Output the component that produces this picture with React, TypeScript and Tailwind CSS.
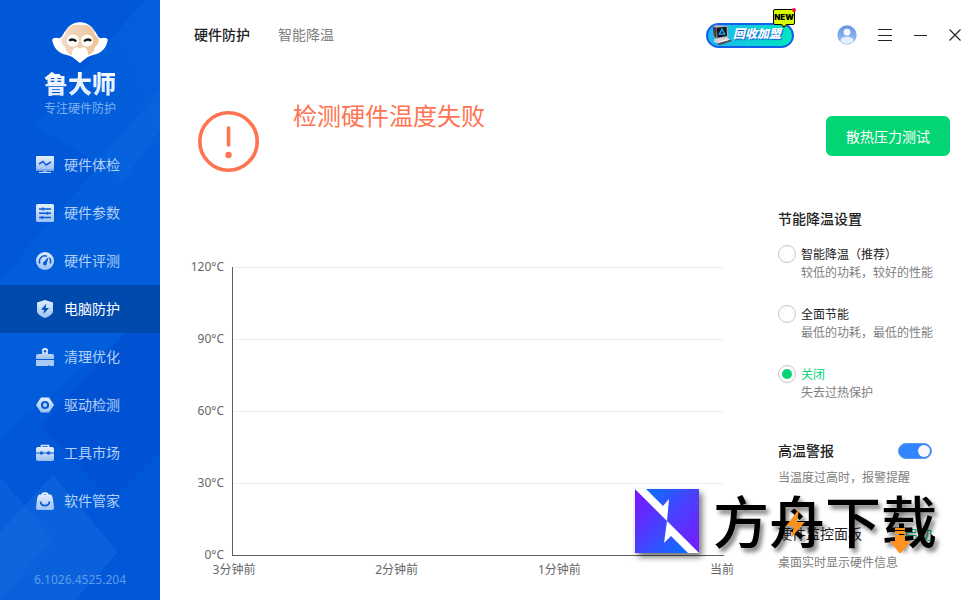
import React, { useState } from 'react';

const BrandLogo: React.FC = () => (
  <svg viewBox="20 14 166 122" className="h-[41px] w-[56px]" aria-hidden="true">
    <defs>
      <linearGradient id="face" x1="0" y1="0" x2="1" y2="0">
        <stop offset="0" stopColor="#f0dccb" />
        <stop offset="1" stopColor="#f0c396" />
      </linearGradient>
    </defs>
    <path
      d="M20 66 Q24 58 42 62 C50 60 54 46 62 37 C80 7 126 7 144 37 C152 46 156 60 164 62 Q182 58 186 66 C182 92 165 108 142 112 C120 117 112 130 103 136 C94 130 86 117 64 112 C40 108 24 92 20 66Z"
      fill="#fff"
    />
    <path
      d="M103 24 C80 17 62 32 61 47 C60 56 48 57 47 69 C46 82 58 84 60 93 C62 106 72 112 84 113 L122 113 C134 112 144 106 146 93 C148 84 160 82 159 69 C158 57 146 56 145 47 C144 32 126 17 103 24Z"
      fill="url(#face)"
    />
    <circle cx="82" cy="69" r="18" fill="#fff" />
    <circle cx="124" cy="69" r="18" fill="#fff" />
    <path d="M81 118 C74 100 88 86 96 90 Q103 96 110 90 C118 86 132 100 125 118 L103 134Z" fill="#fff" />
    <path d="M71 70 Q78 62 92 71M115 71 Q128 62 136 70" stroke="#141414" strokeWidth="7" fill="none" />
  </svg>
);

const NAV_BLUE = '#0a5cd8';

const navItems = [
  {
    title: '硬件体检',
    icon: (
      <>
        <path d="M1 0h16a1 1 0 0 1 1 1v13H0V1a1 1 0 0 1 1-1Z" fill="url(#nav)" />
        <path d="M0 13h18v1a1 1 0 0 1-1 1H1a1 1 0 0 1-1-1Z" fill="#78a9ee" />
        <path d="M7 15h4v1H7z" fill="#78a9ee" />
        <path d="M3 16h12v1H3z" fill="#c4d9f8" />
        <path d="M3 8l4-2.5L10 9l5-3" stroke={NAV_BLUE} strokeWidth="1.5" fill="none" />
      </>
    ),
  },
  {
    title: '硬件参数',
    icon: (
      <>
        <rect width="18" height="18" rx="1.5" fill="url(#nav)" />
        <path
          d="M3 5h12M3 9.3h12M3 13.6h12M7 3.5v3M11.5 7.8v3M6 12.1v3"
          stroke={NAV_BLUE}
          strokeWidth="1.5"
          fill="none"
        />
      </>
    ),
  },
  {
    title: '硬件评测',
    icon: (
      <>
        <circle cx="9" cy="9" r="9" fill="url(#nav)" />
        <path
          d="M3.8 11.5A5.6 5.6 0 0 1 11 4.2M13.5 6A5.6 5.6 0 0 1 14.2 11.5"
          stroke={NAV_BLUE}
          strokeWidth="1.6"
          fill="none"
        />
        <path d="M12.8 4.5L10.8 11.5a1.9 1.9 0 1 1-3.2-1.3Z" fill={NAV_BLUE} />
      </>
    ),
  },
  {
    title: '电脑防护',
    icon: (
      <>
        <path d="M9 0l8 2.6V11c0 3-4 5.5-8 7-4-1.5-8-4-8-7V2.6Z" fill="url(#nav)" />
        <path d="M10.3 3.8L5 9.8h3.2L7.4 14 13 7.9H9.6Z" fill="#004fb4" />
      </>
    ),
  },
  {
    title: '清理优化',
    icon: (
      <>
        <path
          d="M6 6V2.5A2.5 2.5 0 0 1 8.5 0h1A2.5 2.5 0 0 1 12 2.5V6h4a2 2 0 0 1 2 2v3H0V8a2 2 0 0 1 2-2Z"
          fill="url(#nav)"
        />
        <circle cx="9" cy="3.2" r="1.2" fill={NAV_BLUE} />
        <path d="M0 12h18v6h-4.5l-.5-1.5-.7 1.5H0Z" fill="#abcaf5" />
      </>
    ),
  },
  {
    title: '驱动检测',
    icon: (
      <>
        <path d="M5 1.5h8L18 9l-5 7.5H5L0 9Z" fill="url(#nav)" />
        <circle cx="9" cy="9" r="3" stroke={NAV_BLUE} strokeWidth="2.2" fill="none" />
      </>
    ),
  },
  {
    title: '工具市场',
    icon: (
      <>
        <path d="M5.5 3.5v-2h7v2" stroke="#dbe8fb" strokeWidth="1.6" fill="none" />
        <rect y="3" width="18" height="14" rx="2" fill="url(#nav)" />
        <path d="M0 9h18" stroke={NAV_BLUE} strokeWidth="1" />
        <circle cx="5.5" cy="9" r="1.7" fill={NAV_BLUE} />
        <circle cx="12.5" cy="9" r="1.7" fill={NAV_BLUE} />
      </>
    ),
  },
  {
    title: '软件管家',
    icon: (
      <>
        <path d="M6 3.5C6 .2 12 .2 12 3.5" stroke="#fff" strokeWidth="1.6" fill="none" />
        <path
          d="M4 2.5h10c1.8 0 2.5 2 3 5l1 8c.2 1.5-.6 2.5-2 2.5H2c-1.4 0-2.2-1-2-2.5l1-8c.5-3 1.2-5 3-5Z"
          fill="url(#nav)"
        />
        <path d="M4.5 9.5C5 15 13 15 13.5 9.5" stroke={NAV_BLUE} strokeWidth="1.8" fill="none" />
      </>
    ),
  },
];

const Sidebar: React.FC = () => (
  <aside className="relative flex w-40 shrink-0 flex-col overflow-hidden bg-[#0058d8]">
    <svg viewBox="0 0 160 600" preserveAspectRatio="none" className="absolute inset-0 h-full w-full" aria-hidden="true">
      <defs>
        <linearGradient id="nav" x1="0" y1="0" x2="0" y2="1">
          <stop offset="0" stopColor="#e4effd" />
          <stop offset="1" stopColor="#9cc0f3" />
        </linearGradient>
        <linearGradient id="band" x1="1" y1="0" x2="0" y2="1">
          <stop offset="0" stopColor="#0a68e0" />
          <stop offset="1" stopColor="#0062dc" />
        </linearGradient>
      </defs>
      <path d="M160 0v300L125 333 0 438V280L100 165 35 125 145 0Z" fill="url(#band)" opacity=".4" />
      <path d="M160 130L122 182 100 160 160 90Z" fill="#1a72e4" opacity=".2" />
      <path d="M125 333L160 300V452L112 500 40 427Z" fill="#0051d2" opacity=".8" />
      <path d="M53 475L118 552 75 600H0V532Z" fill="#1068de" opacity=".6" />
      <path d="M0 477L53 539 0 600Z" fill="#1a72e4" opacity=".25" />
    </svg>
    <div className="relative flex flex-1 flex-col">
      <div className="flex flex-col items-center pt-[22px]">
        <BrandLogo />
        <div className="mt-[5px] bg-linear-to-b from-white to-[#d5e5fc] bg-clip-text text-[24px] leading-8 font-black text-transparent">
          鲁大师
        </div>
        <p className="text-[12px] leading-[18px] text-[#7fb0f2]">专注硬件防护</p>
      </div>
      <nav className="mt-[23px]">
        {navItems.map((item) => (
          <a
            key={item.title}
            href="#"
            className={
              item.title === '电脑防护'
                ? 'flex h-12 items-center gap-2.5 bg-[#004aae] pl-9 text-[14px] text-white'
                : 'flex h-12 items-center gap-2.5 pl-9 text-[14px] text-[#b3d0f7]'
            }
          >
            <svg viewBox="0 0 18 18" className="h-[18px] w-[18px]" aria-hidden="true">
              {item.icon}
            </svg>
            <span className="pb-0.5">{item.title}</span>
          </a>
        ))}
      </nav>
      <p className="mt-auto pb-[11px] text-center text-[12px] leading-[18px] text-[#5f9cee]">6.1026.4525.204</p>
    </div>
  </aside>
);

const PromoButton: React.FC = () => (
  <button
    type="button"
    className="relative mr-[22px] flex h-[25px] w-[88px] items-center rounded-full border-2 border-[#1560ea] bg-linear-to-r from-[#20b4f0] to-[#04e6c0] pl-[25px]"
  >
    <svg viewBox="0 0 24 24" className="absolute top-0 left-0.5 h-[22px] w-6" aria-hidden="true">
      <path d="M2 2L5 0l13 1 1 12-12 2-4-2Z" fill="#b4aeb6" />
      <path d="M2 2l4 1v12l-3-3Z" fill="#4a3a44" />
      <path d="M6 3l11-1 .5 10L7 14Z" fill="#10151f" />
      <path d="M12 4.5l3 5.5H9Z" stroke="#20a8f4" strokeWidth="1.5" fill="none" />
      <path d="M4 15l13-2 4 3-14 4-4-2Z" fill="#d9d0d0" />
      <path d="M7 20l14-4 2 1.5L9 22Z" fill="#5a4a56" />
      <path d="M8 19l11-3" stroke="#fff" strokeWidth="1" />
    </svg>
    <span className="pb-0.5 text-[12px] leading-5 font-black whitespace-nowrap text-white italic [text-shadow:1px_1px_1px_#0a58d8]">
      回收加盟
    </span>
    <span className="absolute -top-4 -right-[3px] h-4 w-[22px] rounded-[2px] border border-black bg-[#d8ff00] text-center font-['Inter'] text-[8px] leading-[14px] font-black text-black">
      NEW
      <i className="absolute -top-0.5 -right-0.5 h-1 w-1 rounded-full bg-[#ff1040]" />
      <i className="absolute -bottom-[3px] left-2 h-1 w-1 rotate-45 border-r border-b border-black bg-[#d8ff00]" />
    </span>
  </button>
);

const Header: React.FC = () => (
  <header className="flex h-[70px] items-center pr-[19px] pl-[34px]">
    <nav className="flex gap-7 pb-0.5 text-[14px]">
      <a href="#" className="font-medium text-[#222]">硬件防护</a>
      <a href="#" className="text-[#808080]">智能降温</a>
    </nav>
    <div className="ml-auto flex items-center gap-[21px] text-[#222]">
      <PromoButton />
      <button type="button" aria-label="用户">
        <svg viewBox="0 0 20 20" className="h-5 w-5">
          <defs>
            <linearGradient id="user" x1="0" y1="0" x2="0" y2="1">
              <stop offset="0" stopColor="#6896e0" />
              <stop offset="1" stopColor="#9cc2fa" />
            </linearGradient>
            <clipPath id="userClip">
              <circle cx="10" cy="10" r="9" />
            </clipPath>
          </defs>
          <circle cx="10" cy="10" r="9.7" fill="url(#user)" />
          <circle cx="10" cy="7.2" r="3.4" fill="#f4f9ff" />
          <path d="M3.5 19v-3.5c0-5 13-5 13 0V19Z" fill="#e4effd" clipPath="url(#userClip)" />
        </svg>
      </button>
      <button type="button" aria-label="菜单">
        <svg viewBox="0 0 15 12" className="h-3 w-[15px]">
          <path d="M0 .5h14M0 6.5h14M0 11.5h14" stroke="currentColor" />
        </svg>
      </button>
      <button type="button" aria-label="最小化">
        <svg viewBox="0 0 14 12" className="h-3 w-3.5">
          <path d="M0 6.5h13" stroke="currentColor" />
        </svg>
      </button>
      <button type="button" aria-label="关闭窗口">
        <svg viewBox="0 0 12 12" className="h-3 w-3">
          <path d="M.5 .5l11 11M11.5 .5l-11 11" stroke="currentColor" strokeWidth="1.1" />
        </svg>
      </button>
    </div>
  </header>
);

const temperatures = ['120°C', '90°C', '60°C', '30°C', '0°C'];
const times = ['3分钟前', '2分钟前', '1分钟前', '当前'];

const TemperatureChart: React.FC = () => (
  <div className="flex flex-1 pt-[46px] text-[12px] text-[#666]">
    <div className="flex w-[34px] flex-col gap-12 text-right leading-6">
      {temperatures.map((t) => (
        <span key={t}>{t}</span>
      ))}
    </div>
    <div className="ml-2 flex-1 pt-3">
      <div className="border-b border-l border-[#606060]">
        {temperatures.slice(1).map((t) => (
          <div key={t} className="h-[72px] border-t border-[#eee]" />
        ))}
      </div>
      <div className="-mx-5 mt-[5px] flex justify-between leading-[18px]">
        {times.map((t) => (
          <span key={t} className="w-11 text-center whitespace-nowrap">{t}</span>
        ))}
      </div>
    </div>
  </div>
);

const modes = [
  { value: 'smart', label: '智能降温（推荐）', desc: '较低的功耗，较好的性能' },
  { value: 'saving', label: '全面节能', desc: '最低的功耗，最低的性能' },
  { value: 'off', label: '关闭', desc: '失去过热保护' },
];

const SettingsPanel: React.FC = () => {
  const [mode, setMode] = useState('off');
  const [alarm, setAlarm] = useState(true);

  return (
    <section className="w-[202px] shrink-0 pr-12 text-[12px] leading-[18px] text-[#222]">
      <h2 className="text-[14px] leading-5 font-medium">节能降温设置</h2>
      <div className="mt-4 flex flex-col gap-[23px]">
        {modes.map((m) => (
          <div key={m.value} className="flex gap-[5px]">
            <input
              type="radio"
              id={m.value}
              name="mode"
              checked={mode === m.value}
              onChange={() => setMode(m.value)}
              className="grid h-[18px] w-[18px] shrink-0 appearance-none place-items-center rounded-full border border-[#c4c4c4] bg-white before:h-2.5 before:w-2.5 before:rounded-full checked:before:bg-[#04d574]"
            />
            <label htmlFor={m.value} className="pt-px whitespace-nowrap">
              <span className={mode === m.value ? 'block text-[#04d574]' : 'block'}>{m.label}</span>
              <span className="block text-[#808080]">{m.desc}</span>
            </label>
          </div>
        ))}
      </div>

      <div className="mt-[39px] flex items-center justify-between">
        <label htmlFor="alarm" className="text-[14px] leading-5 font-medium">高温警报</label>
        <input
          type="checkbox"
          role="switch"
          id="alarm"
          checked={alarm}
          onChange={() => setAlarm(!alarm)}
          className="flex h-4 w-[34px] appearance-none items-center rounded-full border border-[#b8c4d8] bg-gray-300 px-px before:h-3 before:w-3 before:rounded-full before:bg-[#f8f8f8] checked:justify-end checked:border-[#5c9af0] checked:bg-[#3385ff]"
        />
      </div>
      <p className="mt-2 whitespace-nowrap text-[#808080]">当温度过高时，报警提醒</p>

      <div className="mt-[37px] flex items-center justify-between">
        <h2 className="text-[14px] leading-5">硬件监控面板</h2>
        <button type="button" className="text-[14px] leading-5 text-[#04b574]">启动</button>
      </div>
      <p className="mt-2.5 whitespace-nowrap text-[#808080]">桌面实时显示硬件信息</p>
    </section>
  );
};

const Watermark: React.FC = () => (
  <div className="pointer-events-none absolute top-[489px] left-[635px] flex items-start gap-[14px]">
    <svg viewBox="0 0 64 64" className="h-16 w-16 drop-shadow-[3px_4px_3px_rgba(0,0,0,0.55)]" aria-hidden="true">
      <defs>
        <linearGradient id="upper" x1="0" y1="0" x2="1" y2="1">
          <stop offset="0.1" stopColor="#0a70ff" />
          <stop offset="0.5" stopColor="#4a40ff" />
          <stop offset="1" stopColor="#7a18ff" />
        </linearGradient>
        <linearGradient id="lower" x1="0" y1="0" x2="1" y2="1">
          <stop offset="0" stopColor="#8010ff" />
          <stop offset="0.5" stopColor="#4444ff" />
          <stop offset="0.9" stopColor="#0a70ff" />
        </linearGradient>
      </defs>
      <path d="M0 0H64V64Z" fill="url(#upper)" />
      <path d="M0 0V64H64Z" fill="url(#lower)" />
      <path d="M0 0H11L28 17 34 10 32 32ZM32 32L64 64H53L36 47 29 54Z" fill="#fff" />
    </svg>
    <div className="relative text-[56px] leading-16 font-medium whitespace-nowrap text-black [text-shadow:3px_4px_4px_rgba(0,0,0,0.5)]">
      方舟下载
      <svg viewBox="0 0 224 64" className="absolute inset-0 h-full w-full" aria-hidden="true">
        <path d="M86 20L73 37h8l-3 12 14-16h-8Z" fill="#ff921e" />
        <path d="M182 39h10v2h-10zM182 42h10v3h-10zM182 46h10v6h6L187 65 177 52h5Z" fill="#ff921e" />
      </svg>
    </div>
  </div>
);

const App: React.FC = () => {
  return (
    <div className="relative flex min-h-screen overflow-hidden bg-white font-['Noto_Sans','Noto_Sans_CJK_SC',sans-serif]">
      <Sidebar />
      <main className="min-w-0 flex-1">
        <Header />

        {/* Status */}
        <div className="flex items-start pt-[30px] pr-[30px] pl-[38px]">
          <svg viewBox="0 0 62 62" className="mt-[11px] h-[62px] w-[62px]" aria-hidden="true">
            <circle cx="30.5" cy="30.5" r="28.7" stroke="#ff7350" strokeWidth="3.6" fill="none" />
            <path d="M30.5 17v17" stroke="#ff7350" strokeWidth="3.6" strokeLinecap="round" />
            <circle cx="30.5" cy="44" r="3.2" fill="#ff7350" />
          </svg>
          <h1 className="ml-[33px] text-[24px] leading-8 text-[#ff7350]">检测硬件温度失败</h1>
          <button type="button" className="mt-4 ml-auto h-10 rounded-md bg-[#04d574] px-5 text-[14px] text-white">
            散热压力测试
          </button>
        </div>

        <div className="mt-9 flex gap-[54px] pl-[30px]">
          <TemperatureChart />
          <SettingsPanel />
        </div>
      </main>
      <Watermark />
    </div>
  );
};

export default App;
